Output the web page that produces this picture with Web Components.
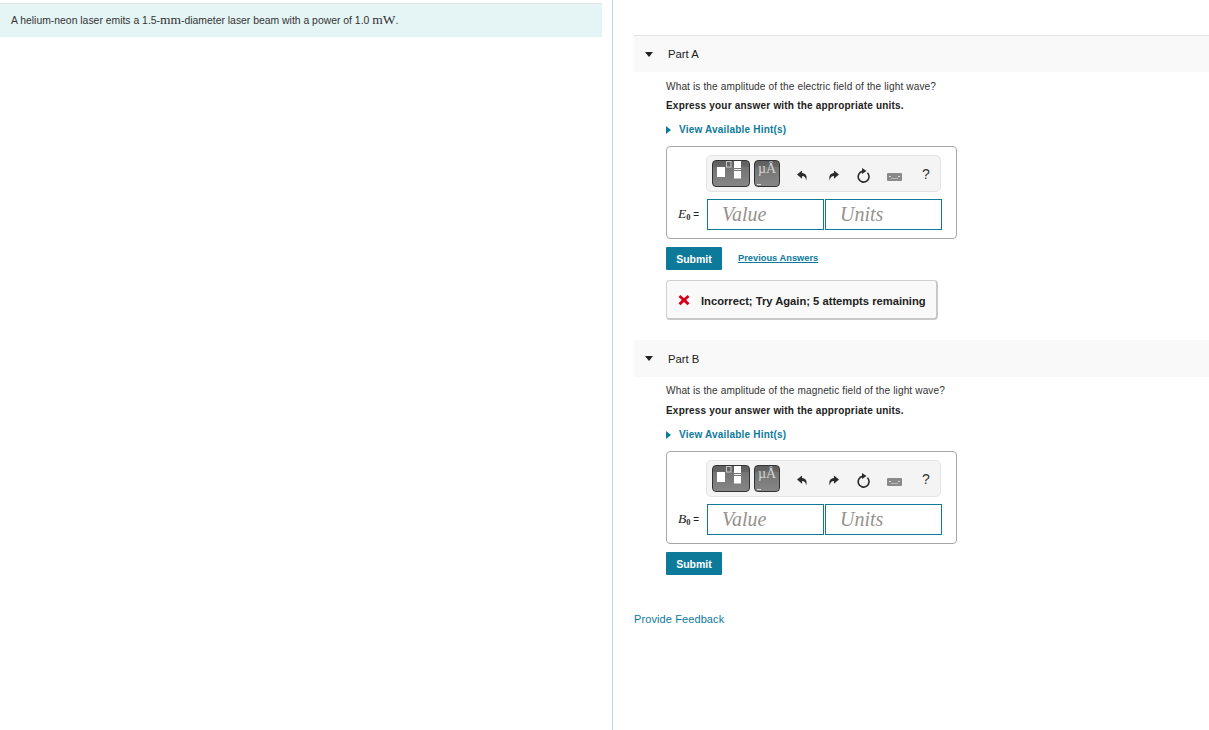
<!DOCTYPE html>
<html><head><meta charset="utf-8"><style>
html,body{margin:0;padding:0;background:#fff;height:730px;overflow:hidden;font-family:"Liberation Sans",Arial,sans-serif;color:#212121}
</style></head><body>
<template id="t-tb"><style>
:host{display:flex;align-items:center;width:235px;height:37px;box-sizing:border-box;background:#f4f4f4;border:1px solid #e4e4e4;border-radius:5px;padding-left:5px}
.b{box-sizing:border-box;height:27px;border-radius:4px;border:1px solid #333;background:linear-gradient(#5f5f5f 0,#666 22%,#747474 26%,#868686 100%);position:relative;flex:none}
.tpl{width:38px}.u{width:26px;margin-left:4px;color:#d4d4d4;font:14px/1 "Liberation Serif",serif;text-align:center;padding-top:1px}
.u::after{content:"";position:absolute;left:2px;bottom:1px;width:4px;height:1px;background:#ddd}
svg.a{position:absolute;left:0;top:0}
svg.i,span.i{flex:none;display:block;position:relative;top:2px}
</style><div class="b tpl"><svg class="a" width="36" height="25"><rect x="4" y="6" width="8" height="10" fill="#fff"/><rect x="13.5" y=".5" width="4.5" height="5.5" fill="none" stroke="#c8c8c8"/><rect x="21" y="0" width="7" height="7" fill="#fff"/><rect x="21" y="8" width="7" height="1" fill="#eee"/><rect x="21" y="10" width="7" height="7.5" fill="#fff"/></svg></div><div class="b u">µÅ</div>
<svg class="i" style="margin-left:17px" width="11" height="11" viewBox="0 0 12 12"><path d="M5.5 .5 0 5 5.5 9.5V6.6C8 6.6 9.5 7.8 10 11.5 11.6 7 9.5 3.6 5.5 3.4Z" fill="#2b2b2b"/></svg>
<svg class="i" style="margin-left:20px" width="11" height="11" viewBox="0 0 12 12"><path d="M6.5 .5 12 5 6.5 9.5V6.6C4 6.600 2.500 7.800 2 11.500 .4 7 2.500 3.600 6.500 3.400Z" fill="#2b2b2b"/></svg>
<svg class="i" style="margin-left:18px" width="13" height="15" viewBox="0 0 13 15"><path d="M10.400 4.800A5.400 5.400 0 1 1 5.500 3.400" fill="none" stroke="#2b2b2b" stroke-width="1.600"/><path d="M5 0 9.500 3 5 6Z" fill="#2b2b2b"/></svg>
<svg class="i" style="margin-left:17px;top:3px" width="15" height="8" viewBox="0 0 15 8"><rect width="15" height="8" rx="1" fill="#8a8a8a"/><rect x="2" y="3" width="2" height="1" fill="#ddd"/><rect x="11" y="3" width="2" height="1" fill="#ddd"/><rect x="4" y="5" width="7" height="1" fill="#bbb"/></svg>
<span class="i" style="margin-left:20px;font:14px/1 'Liberation Sans',sans-serif;color:#333;top:0">?</span>
</template>

<template id="t-answer"><style>
:host{display:block;width:291px;height:93px;box-sizing:border-box;border:1px solid #a8a8a8;border-radius:4px;padding:8px 0 0 39px}
.r{display:flex;gap:1px;margin-top:7px;margin-left:1px;position:relative}
.lab{position:absolute;right:100%;margin-right:8px;top:8px;white-space:nowrap;font:10px/14px "Liberation Sans",sans-serif;color:#212121}
.f{box-sizing:border-box;width:117px;height:31px;border:1px solid #0d7a9a;font:italic 20px/29px "Liberation Serif",serif;color:#97918c;padding-left:14px}
</style><edit-bar></edit-bar><div class="r"><span class="lab"><slot name="v"></slot> =</span><div class="f">Value</div><div class="f">Units</div></div></template>

<template id="t-part"><style>
:host{display:block}
.h{display:flex;align-items:center;height:var(--head,36px);background:#f9f9f9;font:11.300px/14px "Liberation Sans",sans-serif;color:#212121}
.h svg{margin-left:11px;margin-right:15px}
.b{padding-left:32px;width:540px}
</style><div class="h"><svg width="8" height="5" viewBox="0 0 8 5"><path d="M0 0H8L4 5Z" fill="#222"/></svg><span><slot name="title"></slot></span></div><div class="b"><slot></slot></div></template>

<template id="t-hint"><style>:host{display:flex;align-items:center;font:bold 10px/14px "Liberation Sans",sans-serif;color:#0d7a9a;letter-spacing:.2px}
svg{margin-right:8px}</style><svg width="5" height="8" viewBox="0 0 5 8"><path d="M0 0V8L5 4Z" fill="#0d7a9a"/></svg><slot></slot></template>

<template id="t-btn"><style>:host{display:block;flex:none;box-sizing:border-box;width:56px;height:23px;background:#0d7a9a;color:#fff;border-radius:1px;font:bold 10.500px/24px "Liberation Sans",sans-serif;text-align:center}</style><slot></slot></template>

<template id="t-err"><style>:host{display:flex;align-items:center;box-sizing:border-box;width:272px;height:40px;background:#f9f9f9;border:1px solid #d0d0d0;border-right:2px solid #c8c8c8;border-bottom:2px solid #c8c8c8;border-radius:4px;font:bold 11.200px/16px "Liberation Sans",sans-serif;color:#212121;padding-left:11px;white-space:nowrap}
svg{margin-right:11px;flex:none}
span{position:relative;top:1px}</style><svg width="12" height="12" viewBox="0 0 12 12"><path d="M2.500 1 6 4.300 9.500 1 11.500 3 8.200 6 11.500 9.200 9.500 11.200 6 7.900 2.500 11.200.5 9.200 3.800 6 .5 3Z" fill="#d6001c"/></svg><span><slot></slot></span></template>

<template id="t-app"><style>
:host{display:flex;height:730px;width:1209px}
.l{width:602px;flex:none;padding-top:3px;box-sizing:border-box}
.s{height:34px;background:#e5f5f6;border-top:1px solid #e3e3e3;box-sizing:border-box;padding-left:11px;font:10.400px/34px "Liberation Sans",sans-serif;color:#333;white-space:nowrap}
.s b{font:normal 13.500px "Liberation Serif",serif;color:#333}
.rp{margin-left:10px;border-left:1px solid #b8d4e6;flex:1;padding:35px 0 0 21px;min-width:0}
.top{border-top:1px solid #e3e3e3}
</style><div class="l"><div class="s">A helium-neon laser emits a 1.5-<b>mm</b>-diameter laser beam with a power of 1.0 <b>mW</b>.</div></div>
<div class="rp"><div class="top"><slot></slot></div></div></template>

<script>
function def(n,t){customElements.define(n,class extends HTMLElement{constructor(){super();this.attachShadow({mode:'open'}).appendChild(document.getElementById(t).content.cloneNode(true))}})}
[['edit-bar','t-tb'],['answer-box','t-answer'],['mp-part','t-part'],['hint-link','t-hint'],['sub-btn','t-btn'],['err-box','t-err'],['mp-app','t-app']].forEach(a=>def(a[0],a[1]));
</script>
<style>
.q{font:10.100px/14px "Liberation Sans",sans-serif;color:#333;letter-spacing:.12px}
.e{font:bold 10px/14px "Liberation Sans",sans-serif;color:#212121;letter-spacing:.2px}
i.v{font:italic 13.500px/14px "Liberation Serif",serif}sub.v{font:bold 8.500px/1 "Liberation Serif",serif;vertical-align:-2px;color:#333}
.pa{font:bold 9.300px/14px "Liberation Sans",sans-serif;color:#0d7a9a;text-decoration:underline}
.row{display:flex;align-items:flex-start}
.fb{font:11px/14px "Liberation Sans",sans-serif;color:#0d7a9a;letter-spacing:.1px}
</style>
<mp-app>
<mp-part style="height:304px">
<span slot="title">Part A</span>
<div class="q" style="margin-top:8px">What is the amplitude of the electric field of the light wave?</div>
<div class="e" style="margin-top:5px">Express your answer with the appropriate units.</div>
<hint-link style="margin-top:10px">View Available Hint(s)</hint-link>
<answer-box style="margin-top:9px"><span slot="v"><i class="v">E</i><sub class="v">0</sub></span></answer-box>
<div class="row" style="margin-top:8px"><sub-btn>Submit</sub-btn><span class="pa" style="margin-left:16px;margin-top:4px">Previous Answers</span></div>
<err-box style="margin-top:10px">Incorrect; Try Again; 5 attempts remaining</err-box>
</mp-part>
<mp-part style="--head:37px">
<span slot="title">Part B</span>
<div class="q" style="margin-top:7px">What is the amplitude of the magnetic field of the light wave?</div>
<div class="e" style="margin-top:6px">Express your answer with the appropriate units.</div>
<hint-link style="margin-top:10px">View Available Hint(s)</hint-link>
<answer-box style="margin-top:9px"><span slot="v"><i class="v">B</i><sub class="v">0</sub></span></answer-box>
<div class="row" style="margin-top:8px"><sub-btn>Submit</sub-btn></div>
</mp-part>
<div class="fb" style="margin-top:37px">Provide Feedback</div>
</mp-app>
</body></html>
